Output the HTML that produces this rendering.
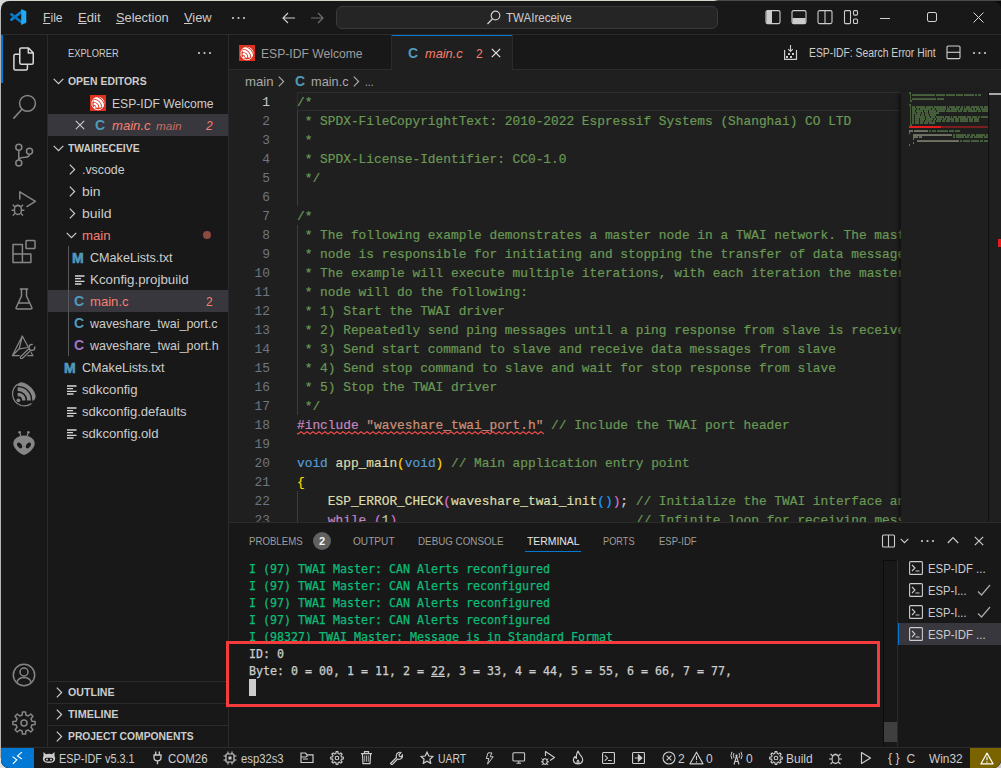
<!DOCTYPE html>
<html lang="en"><head><meta charset="utf-8"><title>main.c - TWAIreceive - Visual Studio Code</title>
<style>
html,body{margin:0;padding:0;width:1001px;height:768px;overflow:hidden;background:#0b0b0b}
body{font-family:"Liberation Sans",sans-serif;font-size:13px;color:#ccc;position:relative}
.b{position:absolute;display:block}
.t{position:absolute;transform-origin:0 50%;white-space:pre;height:20px;line-height:20px}
.mono{font-family:"Liberation Mono",monospace}
#win{position:absolute;left:1px;top:1px;width:1000px;height:767px;background:#181818;border-radius:8px;overflow:hidden}
.code{position:absolute;left:297px;white-space:pre;font-family:"Liberation Mono",monospace;font-size:12.83px;height:19px;line-height:19px;color:#d4d4d4;-webkit-text-stroke:0.2px}
.ln{position:absolute;left:229px;width:41px;text-align:right;font-family:"Liberation Mono",monospace;font-size:12.83px;height:19px;line-height:19px;color:#6e7681}
.term{position:absolute;left:249px;white-space:pre;font-family:"DejaVu Sans Mono","Liberation Mono",monospace;font-size:11.63px;height:17px;line-height:17px;color:#ccc;-webkit-text-stroke:0.25px}
.c{color:#6a9955}.k{color:#569cd6}.p{color:#c586c0}.s{color:#ce9178}.f{color:#dcdcaa}.y{color:#ffd700}.m{color:#da70d6}.bl{color:#179fff}.n{color:#b5cea8}
.g{color:#0dbc79}

</style></head>
<body>
<div class="b" style="left:0px;top:0px;width:1001px;height:1px;background:#555;background:linear-gradient(90deg,#d6d5cb 0,#d6d5cb 714px,#4a4a4a 718px,#4a4a4a 100%)"></div>
<div class="b" style="left:0px;top:0px;width:1px;height:768px;background:#b5b5b5;"></div>
<div class="b" style="left:0px;top:0px;width:10px;height:10px;background:#d9d9d9;"></div>
<div class="b" style="left:0px;top:758px;width:10px;height:10px;background:#e4e4e4;"></div>
<div class="b" style="left:991px;top:758px;width:10px;height:10px;background:#c9c9c9;"></div>
<div id="win"></div>
<div class="b" style="left:1px;top:34px;width:1000px;height:1px;background:#2b2b2b;"></div>
<svg class="b" style="left:9px;top:8px;" width="19" height="18" viewBox="0 0 19 18" preserveAspectRatio="none"><path d="M12.3 4 L2.4 11.6" stroke="#0c7fce" stroke-width="2.7" stroke-linecap="round"/><path d="M12.3 14 L2.4 6.4" stroke="#0a74bf" stroke-width="2.7" stroke-linecap="round"/><path d="M12.2 1 L17.3 3.2 V14.8 L12.2 17 Z" fill="#25a8f3"/></svg>
<span id="t1" class="t" style="left:43px;top:8px;font-size:13px;color:#cccccc;transform:scaleX(0.9347);"><u>F</u>ile</span>
<span id="t2" class="t" style="left:78px;top:8px;font-size:13px;color:#cccccc;transform:scaleX(1.0086);"><u>E</u>dit</span>
<span id="t3" class="t" style="left:116px;top:8px;font-size:13px;color:#cccccc;transform:scaleX(0.9835);"><u>S</u>election</span>
<span id="t4" class="t" style="left:184px;top:8px;font-size:13px;color:#cccccc;transform:scaleX(0.9874);"><u>V</u>iew</span>
<svg class="b" style="left:231px;top:16px;" width="16" height="4" viewBox="0 0 16 4" preserveAspectRatio="none"><circle cx="2" cy="2" r="1.1" fill="#ccc"/><circle cx="7.5" cy="2" r="1.1" fill="#ccc"/><circle cx="13" cy="2" r="1.1" fill="#ccc"/></svg>
<svg class="b" style="left:281px;top:10px;" width="16" height="16" viewBox="0 0 16 16" preserveAspectRatio="none"><path d="M14 8 H2.5 M7 3 L2 8 L7 13" stroke="#ccc" stroke-width="1.2" fill="none"/></svg>
<svg class="b" style="left:309px;top:10px;" width="16" height="16" viewBox="0 0 16 16" preserveAspectRatio="none"><path d="M2 8 H13.5 M9 3 L14 8 L9 13" stroke="#6f6f6f" stroke-width="1.2" fill="none"/></svg>
<div class="b" style="left:336px;top:6px;width:382px;height:23px;background:#252526;border:1px solid #3a3a3a;border-radius:6px;box-sizing:border-box"></div>
<svg class="b" style="left:486px;top:9px;" width="16" height="16" viewBox="0 0 16 16" preserveAspectRatio="none"><circle cx="9.5" cy="6.5" r="4.3" stroke="#ccc" stroke-width="1.2" fill="none"/><path d="M6.5 9.7 L1.5 15" stroke="#ccc" stroke-width="1.3"/></svg>
<span id="t5" class="t" style="left:506px;top:8px;font-size:13px;color:#cccccc;transform:scaleX(0.8874);">TWAIreceive</span>
<svg class="b" style="left:765px;top:10px;" width="16" height="16" viewBox="0 0 16 16" preserveAspectRatio="none"><rect x="1" y="0.6" width="14" height="13" rx="1.5" stroke="#ccc" stroke-width="1.1" fill="none"/><rect x="1.5" y="1" width="5.5" height="12.2" fill="#ccc"/></svg>
<svg class="b" style="left:791px;top:10px;" width="16" height="16" viewBox="0 0 16 16" preserveAspectRatio="none"><rect x="1" y="0.6" width="14" height="13" rx="1.5" stroke="#ccc" stroke-width="1.1" fill="none"/><rect x="1.5" y="8" width="13" height="5.2" fill="#ccc"/></svg>
<svg class="b" style="left:817px;top:10px;" width="16" height="16" viewBox="0 0 16 16" preserveAspectRatio="none"><rect x="1" y="0.6" width="14" height="13" rx="1.5" stroke="#ccc" stroke-width="1.1" fill="none"/><path d="M8 0.6 V13.6" stroke="#ccc" stroke-width="1.1"/></svg>
<svg class="b" style="left:843px;top:10px;" width="16" height="16" viewBox="0 0 16 16" preserveAspectRatio="none"><rect x="1.5" y="0.6" width="6" height="13" rx="1" stroke="#ccc" stroke-width="1.1" fill="none"/><rect x="10.5" y="0.6" width="4" height="4.5" rx="1" stroke="#ccc" stroke-width="1.1" fill="none"/><rect x="10.5" y="9" width="4" height="4.5" rx="1" stroke="#ccc" stroke-width="1.1" fill="none"/></svg>
<div class="b" style="left:880px;top:18px;width:10px;height:1px;background:#d0d0d0;"></div>
<div class="b" style="left:927px;top:12px;width:10px;height:10px;background:transparent;border:1px solid #d0d0d0;border-radius:2px;box-sizing:border-box"></div>
<svg class="b" style="left:973px;top:12px;" width="11" height="11" viewBox="0 0 11 11" preserveAspectRatio="none"><path d="M0.5 0.5 L10.5 10.5 M10.5 0.5 L0.5 10.5" stroke="#d8d8d8" stroke-width="1"/></svg>
<div class="b" style="left:47px;top:35px;width:1px;height:713px;background:#2b2b2b;"></div>
<div class="b" style="left:1px;top:35px;width:1.5px;height:48px;background:#0078d4;"></div>
<svg class="b" style="left:12px;top:47px;" width="24" height="25" viewBox="0 0 24 25" preserveAspectRatio="none"><path d="M7.75 2.5 Q7.75 1 9.25 1 H16.5 L21.25 5.8 V15.8 Q21.25 17.3 19.75 17.3 H9.25 Q7.75 17.3 7.75 15.8 Z M16.3 1.2 V6 H21.1" stroke="#d7d7d7" stroke-width="1.5" fill="none" stroke-linejoin="round"/><path d="M7.75 7.2 H3.4 Q1.9 7.2 1.9 8.7 V21.5 Q1.9 23 3.4 23 H13.9 Q15.4 23 15.4 21.5 V17.3" stroke="#d7d7d7" stroke-width="1.5" fill="none"/></svg>
<svg class="b" style="left:12px;top:94px;" width="26" height="26" viewBox="0 0 26 26" preserveAspectRatio="none"><circle cx="15.5" cy="9.4" r="7.9" stroke="#868686" stroke-width="1.5" fill="none"/><path d="M10 15.3 L1.4 24.6" stroke="#868686" stroke-width="1.6"/></svg>
<svg class="b" style="left:12px;top:143px;" width="24" height="24" viewBox="0 0 24 24" preserveAspectRatio="none"><circle cx="6.8" cy="4.2" r="3" stroke="#868686" stroke-width="1.5" fill="none"/><circle cx="6.8" cy="20" r="3" stroke="#868686" stroke-width="1.5" fill="none"/><circle cx="17.5" cy="8.3" r="3" stroke="#868686" stroke-width="1.5" fill="none"/><path d="M6.8 7.2 V17 M17.5 11.3 Q17.5 14 13 14.3 Q7.3 14.5 6.8 17" stroke="#868686" stroke-width="1.5" fill="none"/></svg>
<svg class="b" style="left:12px;top:190px;overflow:visible;" width="26" height="27" viewBox="0 0 26 27" preserveAspectRatio="none"><path d="M7.8 9.5 V1.8 L23.4 11.4 L14.5 16.8" stroke="#868686" stroke-width="1.5" fill="none" stroke-linejoin="round"/><ellipse cx="5.9" cy="19.9" rx="3.5" ry="4.6" stroke="#868686" stroke-width="1.5" fill="none"/><path d="M3 17 L0.8 14.8 M8.8 17 L11 14.8 M2.4 20.2 H-0.4 M9.4 20.2 H12.4 M3 23.2 L0.8 25.6 M8.8 23.2 L11 25.6 M3.3 16.6 Q5.9 14.4 8.5 16.6" stroke="#868686" stroke-width="1.4" fill="none"/></svg>
<svg class="b" style="left:12px;top:239px;" width="25" height="25" viewBox="0 0 25 25" preserveAspectRatio="none"><path d="M1 5.4 H10.4 V14.9 H18.9 V23.4 H1 Z M1 14.9 H10.4 V23.4" stroke="#868686" stroke-width="1.5" fill="none" stroke-linejoin="round"/><rect x="14" y="1.5" width="9" height="8" rx="0.8" stroke="#868686" stroke-width="1.5" fill="none"/></svg>
<svg class="b" style="left:12px;top:287px;" width="24" height="24" viewBox="0 0 24 24" preserveAspectRatio="none"><path d="M7.8 2 H16.2 M9.5 2 V9 L4.2 20.5 Q3.7 22 5.2 22 H18.8 Q20.3 22 19.8 20.5 L14.5 9 V2 M6.5 16 H17.5" stroke="#868686" stroke-width="1.5" fill="none" stroke-linejoin="round"/></svg>
<svg class="b" style="left:11px;top:335px;" width="26" height="24" viewBox="0 0 26 24" preserveAspectRatio="none"><path d="M11.3 1 L1.3 20.7 H21.9 Z M11.3 1 L8.2 13.8 L1.3 20.7 M8.2 13.8 L17 12.5" stroke="#868686" stroke-width="1.25" fill="none" stroke-linejoin="round"/><path d="M10.6 22.4 L19 14.4" stroke="#181818" stroke-width="5.4" stroke-linecap="round"/><path d="M10.6 22.4 L19 14.4" stroke="#868686" stroke-width="3.6" stroke-linecap="round"/><path d="M10.6 22.4 L19 14.4" stroke="#181818" stroke-width="1.3" stroke-linecap="round"/><circle cx="20.9" cy="12.4" r="2.9" fill="#181818" stroke="#868686" stroke-width="1.3"/><path d="M21.4 11.8 L25.4 8" stroke="#181818" stroke-width="2.6"/></svg>
<svg class="b" style="left:11px;top:380.5px;" width="26" height="26" viewBox="0 0 26 26" preserveAspectRatio="none"><defs><clipPath id="ec"><circle cx="13.4" cy="12.6" r="11.8"/></clipPath></defs><g clip-path="url(#ec)"><circle cx="7.2" cy="19" r="5.6" stroke="#868686" stroke-width="3.5" fill="none"/><circle cx="7.2" cy="19" r="10.8" stroke="#868686" stroke-width="3.8" fill="none"/><circle cx="7.2" cy="19" r="16" stroke="#868686" stroke-width="3.9" fill="none"/><rect x="0" y="19.5" width="26" height="8" fill="#181818"/><rect x="0" y="0" width="6.6" height="26" fill="#181818"/></g><circle cx="7.4" cy="19.3" r="1.9" fill="#868686"/><path d="M6.5 3.2 Q1 7.5 1.6 14 Q2.5 22 10 24.5 Q16 26 20.5 22.5" stroke="#868686" stroke-width="1.2" fill="none"/></svg>
<svg class="b" style="left:11px;top:430px;" width="26" height="26" viewBox="0 0 26 26" preserveAspectRatio="none"><path d="M13 5.5 C19.5 5.5 23.7 9.5 23.7 13.5 C23.7 18.5 17 24 13 25 C9 24 2.3 18.5 2.3 13.5 C2.3 9.5 6.5 5.5 13 5.5 Z" fill="#868686"/><ellipse cx="8.6" cy="15.4" rx="3.2" ry="2.1" transform="rotate(55 8.6 15.4)" fill="#181818"/><ellipse cx="17.4" cy="15.4" rx="3.2" ry="2.1" transform="rotate(-55 17.4 15.4)" fill="#181818"/><path d="M10 6.5 L8.8 2.5 M16 6.5 L17.2 2.5" stroke="#868686" stroke-width="1.1"/><circle cx="8.6" cy="2.2" r="1.3" fill="#868686"/><circle cx="17.4" cy="2.2" r="1.3" fill="#868686"/></svg>
<svg class="b" style="left:12px;top:663px;" width="24" height="24" viewBox="0 0 24 24" preserveAspectRatio="none"><circle cx="12" cy="12" r="10.7" stroke="#868686" stroke-width="1.5" fill="none"/><circle cx="12" cy="9" r="4" stroke="#868686" stroke-width="1.5" fill="none"/><path d="M4.8 19.8 Q6 14.6 12 14.6 Q18 14.6 19.2 19.8" stroke="#868686" stroke-width="1.5" fill="none"/></svg>
<svg class="b" style="left:12px;top:711px;" width="24" height="24" viewBox="0 0 24 24" preserveAspectRatio="none"><path d="M19.98 10.13 L23.09 10.41 L23.09 13.59 L19.98 13.87 L18.97 16.32 L20.96 18.71 L18.71 20.96 L16.32 18.97 L13.87 19.98 L13.59 23.09 L10.41 23.09 L10.13 19.98 L7.68 18.97 L5.29 20.96 L3.04 18.71 L5.03 16.32 L4.02 13.87 L0.91 13.59 L0.91 10.41 L4.02 10.13 L5.03 7.68 L3.04 5.29 L5.29 3.04 L7.68 5.03 L10.13 4.02 L10.41 0.91 L13.59 0.91 L13.87 4.02 L16.32 5.03 L18.71 3.04 L20.96 5.29 L18.97 7.68 Z" stroke="#868686" stroke-width="1.5" fill="none" stroke-linejoin="round"/><circle cx="12" cy="12" r="3" stroke="#868686" stroke-width="1.5" fill="none"/></svg>
<div class="b" style="left:228px;top:35px;width:1px;height:713px;background:#2b2b2b;"></div>
<span id="t6" class="t" style="left:68px;top:43px;font-size:11px;color:#cccccc;transform:scaleX(0.8444);">EXPLORER</span>
<svg class="b" style="left:197px;top:51px;" width="16" height="4" viewBox="0 0 16 4" preserveAspectRatio="none"><circle cx="2" cy="2" r="1.1" fill="#ccc"/><circle cx="7.5" cy="2" r="1.1" fill="#ccc"/><circle cx="13" cy="2" r="1.1" fill="#ccc"/></svg>
<div class="b" style="left:48px;top:114px;width:180px;height:22px;background:#37373d;"></div>
<div class="b" style="left:48px;top:290px;width:180px;height:22px;background:#37373d;"></div>
<svg class="b" style="left:53px;top:78px;" width="11" height="7" viewBox="0 0 11 7" preserveAspectRatio="none"><path d="M0.7 0.8 L5.5 5.6 L10.3 0.8" stroke="#ccc" stroke-width="1.2" fill="none"/></svg>
<span id="t7" class="t" style="left:68px;top:71px;font-size:11px;color:#cccccc;transform:scaleX(0.9477);font-weight:bold;">OPEN EDITORS</span>
<svg class="b" style="left:90px;top:95px;" width="16" height="16" viewBox="0 0 16 16" preserveAspectRatio="none"><rect x="0" y="0" width="16" height="16" fill="#de3220"/><defs><clipPath id="ei1"><circle cx="7.9" cy="8.3" r="6.6"/></clipPath></defs><g clip-path="url(#ei1)"><circle cx="4" cy="12.2" r="3.3" stroke="#fff" stroke-width="2.1" fill="none"/><circle cx="4" cy="12.2" r="6.3" stroke="#fff" stroke-width="2.1" fill="none"/><circle cx="4" cy="12.2" r="9.3" stroke="#fff" stroke-width="2.2" fill="none"/><circle cx="4" cy="12.2" r="12" stroke="#fff" stroke-width="1.6" fill="none"/><rect x="0" y="12.6" width="16" height="4" fill="#de3220"/><rect x="0" y="0" width="3.6" height="16" fill="#de3220"/></g><circle cx="4.6" cy="12.4" r="1.1" fill="#fff"/><path d="M3.4 4.2 Q1.2 7.5 2.2 11 Q3.6 14.6 8 14.8 Q11 14.6 12.6 12.6" stroke="#fff" stroke-width="0.8" fill="none"/></svg>
<span id="t8" class="t" style="left:112px;top:94px;font-size:13px;color:#cccccc;transform:scaleX(0.9334);">ESP-IDF Welcome</span>
<svg class="b" style="left:75px;top:120px;" width="10" height="10" viewBox="0 0 10 10" preserveAspectRatio="none"><path d="M0.8 0.8 L9.2 9.2 M9.2 0.8 L0.8 9.2" stroke="#ccc" stroke-width="1.1"/></svg>
<span id="t9" class="t" style="left:95px;top:115px;font-size:14px;color:#519aba;transform:scaleX(1.0000);font-weight:bold;">C</span>
<span id="t10" class="t" style="left:112px;top:116px;font-size:13px;color:#f88070;transform:scaleX(1.0079);font-style:italic;">main.c</span>
<span id="t11" class="t" style="left:156px;top:116px;font-size:11.5px;color:#c66d61;transform:scaleX(1.0266);font-style:italic;">main</span>
<span id="t12" class="t" style="left:206px;top:116px;font-size:12px;color:#f88070;transform:scaleX(1.0000);font-style:italic;">2</span>
<svg class="b" style="left:53px;top:145px;" width="11" height="7" viewBox="0 0 11 7" preserveAspectRatio="none"><path d="M0.7 0.8 L5.5 5.6 L10.3 0.8" stroke="#ccc" stroke-width="1.2" fill="none"/></svg>
<span id="t13" class="t" style="left:68px;top:138px;font-size:11px;color:#cccccc;transform:scaleX(0.9446);font-weight:bold;">TWAIRECEIVE</span>
<svg class="b" style="left:68.5px;top:163.5px;" width="7" height="11" viewBox="0 0 7 11" preserveAspectRatio="none"><path d="M0.8 0.7 L5.6 5.5 L0.8 10.3" stroke="#ccc" stroke-width="1.2" fill="none"/></svg>
<span id="t14" class="t" style="left:82px;top:160px;font-size:13px;color:#cccccc;transform:scaleX(0.9506);">.vscode</span>
<svg class="b" style="left:68.5px;top:185.5px;" width="7" height="11" viewBox="0 0 7 11" preserveAspectRatio="none"><path d="M0.8 0.7 L5.6 5.5 L0.8 10.3" stroke="#ccc" stroke-width="1.2" fill="none"/></svg>
<span id="t15" class="t" style="left:82px;top:182px;font-size:13px;color:#cccccc;transform:scaleX(1.0715);">bin</span>
<svg class="b" style="left:68.5px;top:207.5px;" width="7" height="11" viewBox="0 0 7 11" preserveAspectRatio="none"><path d="M0.8 0.7 L5.6 5.5 L0.8 10.3" stroke="#ccc" stroke-width="1.2" fill="none"/></svg>
<span id="t16" class="t" style="left:82px;top:204px;font-size:13px;color:#cccccc;transform:scaleX(1.0776);">build</span>
<svg class="b" style="left:66px;top:232px;" width="11" height="7" viewBox="0 0 11 7" preserveAspectRatio="none"><path d="M0.7 0.8 L5.5 5.6 L10.3 0.8" stroke="#ccc" stroke-width="1.2" fill="none"/></svg>
<span id="t17" class="t" style="left:82px;top:226px;font-size:13px;color:#f88070;transform:scaleX(1.0146);">main</span>
<div class="b" style="left:203px;top:231px;width:8px;height:8px;background:#8c4a43;border-radius:50%"></div>
<div class="b" style="left:67.5px;top:246px;width:1px;height:110px;background:#585858;"></div>
<span id="t18" class="t" style="left:72px;top:248px;font-size:14px;color:#519aba;transform:scaleX(1.0000);font-weight:bold;-webkit-text-stroke:0.6px #519aba;">M</span>
<span id="t19" class="t" style="left:90px;top:248px;font-size:13px;color:#cccccc;transform:scaleX(0.9689);">CMakeLists.txt</span>
<svg class="b" style="left:75px;top:275px;" width="10" height="10" viewBox="0 0 10 10" preserveAspectRatio="none"><path d="M0 1 H9.5 M0 3.7 H6 M0 6.3 H9.5 M0 9 H6.5" stroke="#d4d7d6" stroke-width="1.3"/></svg>
<span id="t20" class="t" style="left:90px;top:270px;font-size:13px;color:#cccccc;transform:scaleX(1.0257);">Kconfig.projbuild</span>
<span id="t21" class="t" style="left:74px;top:291px;font-size:14px;color:#519aba;transform:scaleX(1.0000);font-weight:bold;">C</span>
<span id="t22" class="t" style="left:90px;top:292px;font-size:13px;color:#f88070;transform:scaleX(1.0079);">main.c</span>
<span id="t23" class="t" style="left:206px;top:292px;font-size:12px;color:#f88070;transform:scaleX(1.0000);">2</span>
<span id="t24" class="t" style="left:74px;top:313px;font-size:14px;color:#519aba;transform:scaleX(1.0000);font-weight:bold;">C</span>
<span id="t25" class="t" style="left:90px;top:314px;font-size:13px;color:#cccccc;transform:scaleX(0.9596);">waveshare_twai_port.c</span>
<span id="t26" class="t" style="left:74px;top:335px;font-size:14px;color:#a074c4;transform:scaleX(1.0000);font-weight:bold;">C</span>
<span id="t27" class="t" style="left:90px;top:336px;font-size:13px;color:#cccccc;transform:scaleX(0.9618);">waveshare_twai_port.h</span>
<span id="t28" class="t" style="left:64px;top:358px;font-size:14px;color:#519aba;transform:scaleX(1.0000);font-weight:bold;-webkit-text-stroke:0.6px #519aba;">M</span>
<span id="t29" class="t" style="left:82px;top:358px;font-size:13px;color:#cccccc;transform:scaleX(0.9689);">CMakeLists.txt</span>
<svg class="b" style="left:67px;top:385px;" width="10" height="10" viewBox="0 0 10 10" preserveAspectRatio="none"><path d="M0 1 H9.5 M0 3.7 H6 M0 6.3 H9.5 M0 9 H6.5" stroke="#d4d7d6" stroke-width="1.3"/></svg>
<span id="t30" class="t" style="left:82px;top:380px;font-size:13px;color:#cccccc;transform:scaleX(1.0123);">sdkconfig</span>
<svg class="b" style="left:67px;top:407px;" width="10" height="10" viewBox="0 0 10 10" preserveAspectRatio="none"><path d="M0 1 H9.5 M0 3.7 H6 M0 6.3 H9.5 M0 9 H6.5" stroke="#d4d7d6" stroke-width="1.3"/></svg>
<span id="t31" class="t" style="left:82px;top:402px;font-size:13px;color:#cccccc;transform:scaleX(1.0050);">sdkconfig.defaults</span>
<svg class="b" style="left:67px;top:429px;" width="10" height="10" viewBox="0 0 10 10" preserveAspectRatio="none"><path d="M0 1 H9.5 M0 3.7 H6 M0 6.3 H9.5 M0 9 H6.5" stroke="#d4d7d6" stroke-width="1.3"/></svg>
<span id="t32" class="t" style="left:82px;top:424px;font-size:13px;color:#cccccc;transform:scaleX(1.0093);">sdkconfig.old</span>
<div class="b" style="left:48px;top:681px;width:180px;height:1px;background:#2b2b2b;"></div>
<div class="b" style="left:48px;top:703px;width:180px;height:1px;background:#2b2b2b;"></div>
<div class="b" style="left:48px;top:725px;width:180px;height:1px;background:#2b2b2b;"></div>
<svg class="b" style="left:56px;top:686.5px;" width="7" height="11" viewBox="0 0 7 11" preserveAspectRatio="none"><path d="M0.8 0.7 L5.6 5.5 L0.8 10.3" stroke="#ccc" stroke-width="1.2" fill="none"/></svg>
<span id="t33" class="t" style="left:68px;top:682px;font-size:11px;color:#cccccc;transform:scaleX(0.9652);font-weight:bold;">OUTLINE</span>
<svg class="b" style="left:56px;top:708.5px;" width="7" height="11" viewBox="0 0 7 11" preserveAspectRatio="none"><path d="M0.8 0.7 L5.6 5.5 L0.8 10.3" stroke="#ccc" stroke-width="1.2" fill="none"/></svg>
<span id="t34" class="t" style="left:68px;top:704px;font-size:11px;color:#cccccc;transform:scaleX(0.9855);font-weight:bold;">TIMELINE</span>
<svg class="b" style="left:56px;top:730.5px;" width="7" height="11" viewBox="0 0 7 11" preserveAspectRatio="none"><path d="M0.8 0.7 L5.6 5.5 L0.8 10.3" stroke="#ccc" stroke-width="1.2" fill="none"/></svg>
<span id="t35" class="t" style="left:68px;top:726px;font-size:11px;color:#cccccc;transform:scaleX(0.9383);font-weight:bold;">PROJECT COMPONENTS</span>
<div class="b" style="left:229px;top:35px;width:772px;height:487px;background:#1f1f1f;"></div>
<div class="b" style="left:229px;top:35px;width:772px;height:35px;background:#181818;"></div>
<div class="b" style="left:229px;top:69px;width:772px;height:1px;background:#2b2b2b;"></div>
<div class="b" style="left:391px;top:35px;width:1px;height:35px;background:#2b2b2b;"></div>
<div class="b" style="left:392px;top:35px;width:120px;height:36px;background:#1f1f1f;"></div>
<div class="b" style="left:392px;top:35px;width:120px;height:1px;background:#0078d4;"></div>
<div class="b" style="left:512px;top:35px;width:1px;height:35px;background:#2b2b2b;"></div>
<svg class="b" style="left:239px;top:45px;" width="16" height="16" viewBox="0 0 16 16" preserveAspectRatio="none"><rect x="0" y="0" width="16" height="16" fill="#de3220"/><defs><clipPath id="ei2"><circle cx="7.9" cy="8.3" r="6.6"/></clipPath></defs><g clip-path="url(#ei2)"><circle cx="4" cy="12.2" r="3.3" stroke="#fff" stroke-width="2.1" fill="none"/><circle cx="4" cy="12.2" r="6.3" stroke="#fff" stroke-width="2.1" fill="none"/><circle cx="4" cy="12.2" r="9.3" stroke="#fff" stroke-width="2.2" fill="none"/><circle cx="4" cy="12.2" r="12" stroke="#fff" stroke-width="1.6" fill="none"/><rect x="0" y="12.6" width="16" height="4" fill="#de3220"/><rect x="0" y="0" width="3.6" height="16" fill="#de3220"/></g><circle cx="4.6" cy="12.4" r="1.1" fill="#fff"/><path d="M3.4 4.2 Q1.2 7.5 2.2 11 Q3.6 14.6 8 14.8 Q11 14.6 12.6 12.6" stroke="#fff" stroke-width="0.8" fill="none"/></svg>
<span id="t36" class="t" style="left:261px;top:44px;font-size:13px;color:#9d9d9d;transform:scaleX(0.9334);">ESP-IDF Welcome</span>
<span id="t37" class="t" style="left:408px;top:43px;font-size:14px;color:#519aba;transform:scaleX(1.0000);font-weight:bold;">C</span>
<span id="t38" class="t" style="left:425px;top:44px;font-size:13px;color:#f88070;transform:scaleX(0.9818);font-style:italic;">main.c</span>
<span id="t39" class="t" style="left:476px;top:44px;font-size:12px;color:#f88070;transform:scaleX(1.0000);">2</span>
<svg class="b" style="left:491px;top:48px;" width="10" height="10" viewBox="0 0 10 10" preserveAspectRatio="none"><path d="M0.8 0.8 L9.2 9.2 M9.2 0.8 L0.8 9.2" stroke="#e8e8e8" stroke-width="1.2"/></svg>
<svg class="b" style="left:783px;top:44px;" width="16" height="17" viewBox="0 0 16 17" preserveAspectRatio="none"><path d="M1.6 6 V15.4 H13.5 V6" stroke="#ccc" stroke-width="1.2" fill="none" stroke-linejoin="round"/><path d="M7.5 1 V7.3 M5.2 5.2 L7.5 7.5 L9.8 5.2" stroke="#ccc" stroke-width="1.1" fill="none"/><rect x="5" y="9" width="2" height="2" fill="#ccc"/><rect x="9" y="9" width="2" height="2" fill="#ccc"/><rect x="3" y="12" width="2" height="2" fill="#ccc"/><rect x="7" y="12" width="2" height="2" fill="#ccc"/></svg>
<span id="t40" class="t" style="left:809px;top:42.5px;font-size:12px;color:#cccccc;transform:scaleX(0.8630);">ESP-IDF: Search Error Hint</span>
<svg class="b" style="left:946px;top:45px;" width="15" height="15" viewBox="0 0 15 15" preserveAspectRatio="none"><rect x="1" y="1" width="13" height="12.6" rx="1.2" stroke="#d0d0d0" stroke-width="1.1" fill="none"/><path d="M1 7.3 H14" stroke="#d0d0d0" stroke-width="1.1"/></svg>
<svg class="b" style="left:972px;top:51px;" width="16" height="4" viewBox="0 0 16 4" preserveAspectRatio="none"><circle cx="2" cy="2" r="1.1" fill="#ccc"/><circle cx="7.5" cy="2" r="1.1" fill="#ccc"/><circle cx="13" cy="2" r="1.1" fill="#ccc"/></svg>
<span id="t41" class="t" style="left:245px;top:72px;font-size:13px;color:#a9a9a9;transform:scaleX(1.0146);">main</span>
<svg class="b" style="left:278px;top:76px;" width="7" height="11" viewBox="0 0 7 11" preserveAspectRatio="none"><path d="M0.8 0.7 L5.6 5.5 L0.8 10.3" stroke="#a9a9a9" stroke-width="1.2" fill="none"/></svg>
<span id="t42" class="t" style="left:295px;top:71px;font-size:14px;color:#519aba;transform:scaleX(1.0000);font-weight:bold;">C</span>
<span id="t43" class="t" style="left:311px;top:72px;font-size:13px;color:#a9a9a9;transform:scaleX(0.9818);">main.c</span>
<svg class="b" style="left:353px;top:76px;" width="7" height="11" viewBox="0 0 7 11" preserveAspectRatio="none"><path d="M0.8 0.7 L5.6 5.5 L0.8 10.3" stroke="#a9a9a9" stroke-width="1.2" fill="none"/></svg>
<span id="t44" class="t" style="left:365px;top:72px;font-size:13px;color:#a9a9a9;transform:scaleX(0.7931);">...</span>
<div class="b" style="left:229px;top:92px;width:672px;height:430px;overflow:hidden">
<div class="b" style="left:68px;top:0;width:700px;height:19px;box-sizing:border-box;border:1px solid #2e2e2e"></div>
<div class="b" style="left:68px;top:19px;width:1px;height:95px;background:#3c3c3c"></div>
<div class="b" style="left:68px;top:133px;width:1px;height:190px;background:#3c3c3c"></div>
<div class="b" style="left:68px;top:399px;width:1px;height:57px;background:#3c3c3c"></div>
<div class="ln" style="left:0;top:1px;color:#ccc">1</div><div class="code" style="left:68px;top:1px"><span class="c">/*</span></div>
<div class="ln" style="left:0;top:20px;color:#6e7681">2</div><div class="code" style="left:68px;top:20px"><span class="c"> * SPDX-FileCopyrightText: 2010-2022 Espressif Systems (Shanghai) CO LTD</span></div>
<div class="ln" style="left:0;top:39px;color:#6e7681">3</div><div class="code" style="left:68px;top:39px"><span class="c"> *</span></div>
<div class="ln" style="left:0;top:58px;color:#6e7681">4</div><div class="code" style="left:68px;top:58px"><span class="c"> * SPDX-License-Identifier: CC0-1.0</span></div>
<div class="ln" style="left:0;top:77px;color:#6e7681">5</div><div class="code" style="left:68px;top:77px"><span class="c"> */</span></div>
<div class="ln" style="left:0;top:96px;color:#6e7681">6</div><div class="code" style="left:68px;top:96px"></div>
<div class="ln" style="left:0;top:115px;color:#6e7681">7</div><div class="code" style="left:68px;top:115px"><span class="c">/*</span></div>
<div class="ln" style="left:0;top:134px;color:#6e7681">8</div><div class="code" style="left:68px;top:134px"><span class="c"> * The following example demonstrates a master node in a TWAI network. The master</span></div>
<div class="ln" style="left:0;top:153px;color:#6e7681">9</div><div class="code" style="left:68px;top:153px"><span class="c"> * node is responsible for initiating and stopping the transfer of data messages. The</span></div>
<div class="ln" style="left:0;top:172px;color:#6e7681">10</div><div class="code" style="left:68px;top:172px"><span class="c"> * The example will execute multiple iterations, with each iteration the master</span></div>
<div class="ln" style="left:0;top:191px;color:#6e7681">11</div><div class="code" style="left:68px;top:191px"><span class="c"> * node will do the following:</span></div>
<div class="ln" style="left:0;top:210px;color:#6e7681">12</div><div class="code" style="left:68px;top:210px"><span class="c"> * 1) Start the TWAI driver</span></div>
<div class="ln" style="left:0;top:229px;color:#6e7681">13</div><div class="code" style="left:68px;top:229px"><span class="c"> * 2) Repeatedly send ping messages until a ping response from slave is received</span></div>
<div class="ln" style="left:0;top:248px;color:#6e7681">14</div><div class="code" style="left:68px;top:248px"><span class="c"> * 3) Send start command to slave and receive data messages from slave</span></div>
<div class="ln" style="left:0;top:267px;color:#6e7681">15</div><div class="code" style="left:68px;top:267px"><span class="c"> * 4) Send stop command to slave and wait for stop response from slave</span></div>
<div class="ln" style="left:0;top:286px;color:#6e7681">16</div><div class="code" style="left:68px;top:286px"><span class="c"> * 5) Stop the TWAI driver</span></div>
<div class="ln" style="left:0;top:305px;color:#6e7681">17</div><div class="code" style="left:68px;top:305px"><span class="c"> */</span></div>
<div class="ln" style="left:0;top:324px;color:#6e7681">18</div><div class="code" style="left:68px;top:324px"><span class="p">#include</span> <span class="s">"waveshare_twai_port.h"</span> <span class="c">// Include the TWAI port header</span></div>
<div class="ln" style="left:0;top:343px;color:#6e7681">19</div><div class="code" style="left:68px;top:343px"></div>
<div class="ln" style="left:0;top:362px;color:#6e7681">20</div><div class="code" style="left:68px;top:362px"><span class="k">void</span> <span class="f">app_main</span><span class="y">(</span><span class="k">void</span><span class="y">)</span> <span class="c">// Main application entry point</span></div>
<div class="ln" style="left:0;top:381px;color:#6e7681">21</div><div class="code" style="left:68px;top:381px"><span class="y">{</span></div>
<div class="ln" style="left:0;top:400px;color:#6e7681">22</div><div class="code" style="left:68px;top:400px">    <span class="f">ESP_ERROR_CHECK</span><span class="m">(</span><span class="f">waveshare_twai_init</span><span class="bl">()</span><span class="m">)</span>; <span class="c">// Initialize the TWAI interface and start</span></div>
<div class="ln" style="left:0;top:419px;color:#6e7681">23</div><div class="code" style="left:68px;top:419px">    <span class="p">while</span> <span class="m">(</span><span class="n">1</span><span class="m">)</span>                               <span class="c">// Infinite loop for receiving messages</span></div>
<div class="ln" style="left:0;top:438px;color:#6e7681">24</div><div class="code" style="left:68px;top:438px">    <span class="y">{</span></div>
<svg class="b" style="left:68px;top:339px" width="247" height="4" viewBox="0 0 247 4"><path d="M0 2.2 L1 3 L4 0.6 L7 3 L10 0.6 L13 3 L16 0.6 L19 3 L22 0.6 L25 3 L28 0.6 L31 3 L34 0.6 L37 3 L40 0.6 L43 3 L46 0.6 L49 3 L52 0.6 L55 3 L58 0.6 L61 3 L64 0.6 L67 3 L70 0.6 L73 3 L76 0.6 L79 3 L82 0.6 L85 3 L88 0.6 L91 3 L94 0.6 L97 3 L100 0.6 L103 3 L106 0.6 L109 3 L112 0.6 L115 3 L118 0.6 L121 3 L124 0.6 L127 3 L130 0.6 L133 3 L136 0.6 L139 3 L142 0.6 L145 3 L148 0.6 L151 3 L154 0.6 L157 3 L160 0.6 L163 3 L166 0.6 L169 3 L172 0.6 L175 3 L178 0.6 L181 3 L184 0.6 L187 3 L190 0.6 L193 3 L196 0.6 L199 3 L202 0.6 L205 3 L208 0.6 L211 3 L214 0.6 L217 3 L220 0.6 L223 3 L226 0.6 L229 3 L232 0.6 L235 3 L238 0.6 L241 3 L244 0.6 L247 3" stroke="#f14c4c" stroke-width="1.15" fill="none" stroke-linejoin="round"/></svg>
</div>
<div class="b" style="left:901px;top:92px;width:87px;height:430px;background:#1f1f1f;box-shadow:-3px 0 4px -1px rgba(0,0,0,0.55)"></div>
<svg class="b" style="left:909px;top:92px;" width="79" height="64" viewBox="0 0 79 64" preserveAspectRatio="none"><rect x="0" y="0.3" width="2" height="1.5" fill="#6a9955" opacity="0.68"/><rect x="1" y="2.3" width="1" height="1.5" fill="#6a9955" opacity="0.68"/><rect x="3" y="2.3" width="23" height="1.5" fill="#6a9955" opacity="0.68"/><rect x="27" y="2.3" width="9" height="1.5" fill="#6a9955" opacity="0.68"/><rect x="37" y="2.3" width="9" height="1.5" fill="#6a9955" opacity="0.68"/><rect x="47" y="2.3" width="7" height="1.5" fill="#6a9955" opacity="0.68"/><rect x="55" y="2.3" width="10" height="1.5" fill="#6a9955" opacity="0.68"/><rect x="66" y="2.3" width="2" height="1.5" fill="#6a9955" opacity="0.68"/><rect x="69" y="2.3" width="3" height="1.5" fill="#6a9955" opacity="0.68"/><rect x="1" y="4.3" width="1" height="1.5" fill="#6a9955" opacity="0.68"/><rect x="1" y="6.3" width="1" height="1.5" fill="#6a9955" opacity="0.68"/><rect x="3" y="6.3" width="24" height="1.5" fill="#6a9955" opacity="0.68"/><rect x="28" y="6.3" width="7" height="1.5" fill="#6a9955" opacity="0.68"/><rect x="1" y="8.3" width="2" height="1.5" fill="#6a9955" opacity="0.68"/><rect x="0" y="12.3" width="2" height="1.5" fill="#6a9955" opacity="0.68"/><rect x="1" y="14.3" width="1" height="1.5" fill="#6a9955" opacity="0.68"/><rect x="3" y="14.3" width="3" height="1.5" fill="#6a9955" opacity="0.68"/><rect x="7" y="14.3" width="9" height="1.5" fill="#6a9955" opacity="0.68"/><rect x="17" y="14.3" width="7" height="1.5" fill="#6a9955" opacity="0.68"/><rect x="25" y="14.3" width="12" height="1.5" fill="#6a9955" opacity="0.68"/><rect x="38" y="14.3" width="1" height="1.5" fill="#6a9955" opacity="0.68"/><rect x="40" y="14.3" width="6" height="1.5" fill="#6a9955" opacity="0.68"/><rect x="47" y="14.3" width="4" height="1.5" fill="#6a9955" opacity="0.68"/><rect x="52" y="14.3" width="2" height="1.5" fill="#6a9955" opacity="0.68"/><rect x="55" y="14.3" width="1" height="1.5" fill="#6a9955" opacity="0.68"/><rect x="57" y="14.3" width="4" height="1.5" fill="#6a9955" opacity="0.68"/><rect x="62" y="14.3" width="8" height="1.5" fill="#6a9955" opacity="0.68"/><rect x="71" y="14.3" width="3" height="1.5" fill="#6a9955" opacity="0.68"/><rect x="75" y="14.3" width="6" height="1.5" fill="#6a9955" opacity="0.68"/><rect x="1" y="16.3" width="1" height="1.5" fill="#6a9955" opacity="0.68"/><rect x="3" y="16.3" width="4" height="1.5" fill="#6a9955" opacity="0.68"/><rect x="8" y="16.3" width="2" height="1.5" fill="#6a9955" opacity="0.68"/><rect x="11" y="16.3" width="11" height="1.5" fill="#6a9955" opacity="0.68"/><rect x="23" y="16.3" width="3" height="1.5" fill="#6a9955" opacity="0.68"/><rect x="27" y="16.3" width="10" height="1.5" fill="#6a9955" opacity="0.68"/><rect x="38" y="16.3" width="3" height="1.5" fill="#6a9955" opacity="0.68"/><rect x="42" y="16.3" width="8" height="1.5" fill="#6a9955" opacity="0.68"/><rect x="51" y="16.3" width="3" height="1.5" fill="#6a9955" opacity="0.68"/><rect x="55" y="16.3" width="8" height="1.5" fill="#6a9955" opacity="0.68"/><rect x="64" y="16.3" width="2" height="1.5" fill="#6a9955" opacity="0.68"/><rect x="67" y="16.3" width="4" height="1.5" fill="#6a9955" opacity="0.68"/><rect x="72" y="16.3" width="9" height="1.5" fill="#6a9955" opacity="0.68"/><rect x="82" y="16.3" width="0" height="1.5" fill="#6a9955" opacity="0.68"/><rect x="1" y="18.3" width="1" height="1.5" fill="#6a9955" opacity="0.68"/><rect x="3" y="18.3" width="3" height="1.5" fill="#6a9955" opacity="0.68"/><rect x="7" y="18.3" width="7" height="1.5" fill="#6a9955" opacity="0.68"/><rect x="15" y="18.3" width="4" height="1.5" fill="#6a9955" opacity="0.68"/><rect x="20" y="18.3" width="7" height="1.5" fill="#6a9955" opacity="0.68"/><rect x="28" y="18.3" width="8" height="1.5" fill="#6a9955" opacity="0.68"/><rect x="37" y="18.3" width="11" height="1.5" fill="#6a9955" opacity="0.68"/><rect x="49" y="18.3" width="4" height="1.5" fill="#6a9955" opacity="0.68"/><rect x="54" y="18.3" width="4" height="1.5" fill="#6a9955" opacity="0.68"/><rect x="59" y="18.3" width="9" height="1.5" fill="#6a9955" opacity="0.68"/><rect x="69" y="18.3" width="3" height="1.5" fill="#6a9955" opacity="0.68"/><rect x="73" y="18.3" width="6" height="1.5" fill="#6a9955" opacity="0.68"/><rect x="1" y="20.3" width="1" height="1.5" fill="#6a9955" opacity="0.68"/><rect x="3" y="20.3" width="4" height="1.5" fill="#6a9955" opacity="0.68"/><rect x="8" y="20.3" width="4" height="1.5" fill="#6a9955" opacity="0.68"/><rect x="13" y="20.3" width="2" height="1.5" fill="#6a9955" opacity="0.68"/><rect x="16" y="20.3" width="3" height="1.5" fill="#6a9955" opacity="0.68"/><rect x="20" y="20.3" width="10" height="1.5" fill="#6a9955" opacity="0.68"/><rect x="1" y="22.3" width="1" height="1.5" fill="#6a9955" opacity="0.68"/><rect x="3" y="22.3" width="2" height="1.5" fill="#6a9955" opacity="0.68"/><rect x="6" y="22.3" width="5" height="1.5" fill="#6a9955" opacity="0.68"/><rect x="12" y="22.3" width="3" height="1.5" fill="#6a9955" opacity="0.68"/><rect x="16" y="22.3" width="4" height="1.5" fill="#6a9955" opacity="0.68"/><rect x="21" y="22.3" width="6" height="1.5" fill="#6a9955" opacity="0.68"/><rect x="1" y="24.3" width="1" height="1.5" fill="#6a9955" opacity="0.68"/><rect x="3" y="24.3" width="2" height="1.5" fill="#6a9955" opacity="0.68"/><rect x="6" y="24.3" width="10" height="1.5" fill="#6a9955" opacity="0.68"/><rect x="17" y="24.3" width="4" height="1.5" fill="#6a9955" opacity="0.68"/><rect x="22" y="24.3" width="4" height="1.5" fill="#6a9955" opacity="0.68"/><rect x="27" y="24.3" width="8" height="1.5" fill="#6a9955" opacity="0.68"/><rect x="36" y="24.3" width="5" height="1.5" fill="#6a9955" opacity="0.68"/><rect x="42" y="24.3" width="1" height="1.5" fill="#6a9955" opacity="0.68"/><rect x="44" y="24.3" width="4" height="1.5" fill="#6a9955" opacity="0.68"/><rect x="49" y="24.3" width="8" height="1.5" fill="#6a9955" opacity="0.68"/><rect x="58" y="24.3" width="4" height="1.5" fill="#6a9955" opacity="0.68"/><rect x="63" y="24.3" width="5" height="1.5" fill="#6a9955" opacity="0.68"/><rect x="69" y="24.3" width="2" height="1.5" fill="#6a9955" opacity="0.68"/><rect x="72" y="24.3" width="8" height="1.5" fill="#6a9955" opacity="0.68"/><rect x="1" y="26.3" width="1" height="1.5" fill="#6a9955" opacity="0.68"/><rect x="3" y="26.3" width="2" height="1.5" fill="#6a9955" opacity="0.68"/><rect x="6" y="26.3" width="4" height="1.5" fill="#6a9955" opacity="0.68"/><rect x="11" y="26.3" width="5" height="1.5" fill="#6a9955" opacity="0.68"/><rect x="17" y="26.3" width="7" height="1.5" fill="#6a9955" opacity="0.68"/><rect x="25" y="26.3" width="2" height="1.5" fill="#6a9955" opacity="0.68"/><rect x="28" y="26.3" width="5" height="1.5" fill="#6a9955" opacity="0.68"/><rect x="34" y="26.3" width="3" height="1.5" fill="#6a9955" opacity="0.68"/><rect x="38" y="26.3" width="7" height="1.5" fill="#6a9955" opacity="0.68"/><rect x="46" y="26.3" width="4" height="1.5" fill="#6a9955" opacity="0.68"/><rect x="51" y="26.3" width="8" height="1.5" fill="#6a9955" opacity="0.68"/><rect x="60" y="26.3" width="4" height="1.5" fill="#6a9955" opacity="0.68"/><rect x="65" y="26.3" width="5" height="1.5" fill="#6a9955" opacity="0.68"/><rect x="1" y="28.3" width="1" height="1.5" fill="#6a9955" opacity="0.68"/><rect x="3" y="28.3" width="2" height="1.5" fill="#6a9955" opacity="0.68"/><rect x="6" y="28.3" width="4" height="1.5" fill="#6a9955" opacity="0.68"/><rect x="11" y="28.3" width="4" height="1.5" fill="#6a9955" opacity="0.68"/><rect x="16" y="28.3" width="7" height="1.5" fill="#6a9955" opacity="0.68"/><rect x="24" y="28.3" width="2" height="1.5" fill="#6a9955" opacity="0.68"/><rect x="27" y="28.3" width="5" height="1.5" fill="#6a9955" opacity="0.68"/><rect x="33" y="28.3" width="3" height="1.5" fill="#6a9955" opacity="0.68"/><rect x="37" y="28.3" width="4" height="1.5" fill="#6a9955" opacity="0.68"/><rect x="42" y="28.3" width="3" height="1.5" fill="#6a9955" opacity="0.68"/><rect x="46" y="28.3" width="4" height="1.5" fill="#6a9955" opacity="0.68"/><rect x="51" y="28.3" width="8" height="1.5" fill="#6a9955" opacity="0.68"/><rect x="60" y="28.3" width="4" height="1.5" fill="#6a9955" opacity="0.68"/><rect x="65" y="28.3" width="5" height="1.5" fill="#6a9955" opacity="0.68"/><rect x="1" y="30.3" width="1" height="1.5" fill="#6a9955" opacity="0.68"/><rect x="3" y="30.3" width="2" height="1.5" fill="#6a9955" opacity="0.68"/><rect x="6" y="30.3" width="4" height="1.5" fill="#6a9955" opacity="0.68"/><rect x="11" y="30.3" width="3" height="1.5" fill="#6a9955" opacity="0.68"/><rect x="15" y="30.3" width="4" height="1.5" fill="#6a9955" opacity="0.68"/><rect x="20" y="30.3" width="6" height="1.5" fill="#6a9955" opacity="0.68"/><rect x="1" y="32.3" width="2" height="1.5" fill="#6a9955" opacity="0.68"/><rect x="0" y="34" width="79" height="2" fill="#7a1f1f"/><rect x="0" y="34" width="32" height="2" fill="#e51c1c"/><rect x="0" y="38.3" width="4" height="1.5" fill="#b9b9a0" opacity="0.68"/><rect x="5" y="38.3" width="14" height="1.5" fill="#b9b9a0" opacity="0.68"/><rect x="20" y="38.3" width="2" height="1.5" fill="#6a9955" opacity="0.68"/><rect x="23" y="38.3" width="4" height="1.5" fill="#6a9955" opacity="0.68"/><rect x="28" y="38.3" width="11" height="1.5" fill="#6a9955" opacity="0.68"/><rect x="40" y="38.3" width="5" height="1.5" fill="#6a9955" opacity="0.68"/><rect x="46" y="38.3" width="5" height="1.5" fill="#6a9955" opacity="0.68"/><rect x="0" y="40.3" width="1" height="1.5" fill="#b9b9a0" opacity="0.68"/><rect x="4" y="42.3" width="39" height="1.5" fill="#b9b9a0" opacity="0.68"/><rect x="44" y="42.3" width="2" height="1.5" fill="#6a9955" opacity="0.68"/><rect x="47" y="42.3" width="10" height="1.5" fill="#6a9955" opacity="0.68"/><rect x="58" y="42.3" width="3" height="1.5" fill="#6a9955" opacity="0.68"/><rect x="62" y="42.3" width="4" height="1.5" fill="#6a9955" opacity="0.68"/><rect x="67" y="42.3" width="9" height="1.5" fill="#6a9955" opacity="0.68"/><rect x="77" y="42.3" width="3" height="1.5" fill="#6a9955" opacity="0.68"/><rect x="81" y="42.3" width="1" height="1.5" fill="#6a9955" opacity="0.68"/><rect x="4" y="44.3" width="5" height="1.5" fill="#b9b9a0" opacity="0.68"/><rect x="10" y="44.3" width="3" height="1.5" fill="#b9b9a0" opacity="0.68"/><rect x="44" y="44.3" width="2" height="1.5" fill="#6a9955" opacity="0.68"/><rect x="47" y="44.3" width="8" height="1.5" fill="#6a9955" opacity="0.68"/><rect x="56" y="44.3" width="4" height="1.5" fill="#6a9955" opacity="0.68"/><rect x="61" y="44.3" width="3" height="1.5" fill="#6a9955" opacity="0.68"/><rect x="65" y="44.3" width="9" height="1.5" fill="#6a9955" opacity="0.68"/><rect x="75" y="44.3" width="7" height="1.5" fill="#6a9955" opacity="0.68"/><rect x="4" y="46.3" width="1" height="1.5" fill="#b9b9a0" opacity="0.68"/><rect x="8" y="48.3" width="42" height="1.5" fill="#b9b9a0" opacity="0.68"/><rect x="51" y="48.3" width="2" height="1.5" fill="#6a9955" opacity="0.68"/><rect x="54" y="48.3" width="7" height="1.5" fill="#6a9955" opacity="0.68"/><rect x="62" y="48.3" width="8" height="1.5" fill="#6a9955" opacity="0.68"/><rect x="71" y="48.3" width="3" height="1.5" fill="#6a9955" opacity="0.68"/><rect x="75" y="48.3" width="4" height="1.5" fill="#6a9955" opacity="0.68"/><rect x="80" y="48.3" width="2" height="1.5" fill="#6a9955" opacity="0.68"/><rect x="4" y="50.3" width="1" height="1.5" fill="#b9b9a0" opacity="0.68"/><rect x="0" y="52.3" width="1" height="1.5" fill="#b9b9a0" opacity="0.68"/></svg>
<div class="b" style="left:988px;top:92px;width:13px;height:430px;background:#1f1f1f;border-left:1px solid #0f0f0f;box-sizing:border-box"></div>
<div class="b" style="left:989px;top:93px;width:12px;height:1.5px;background:#a8a8a8;"></div>
<div class="b" style="left:998px;top:239px;width:3px;height:8px;background:#e51c1c;"></div>
<div class="b" style="left:229px;top:522px;width:772px;height:226px;background:#181818;"></div>
<div class="b" style="left:229px;top:522px;width:772px;height:1px;background:#2b2b2b;"></div>
<span id="t45" class="t" style="left:249px;top:531px;font-size:11px;color:#9d9d9d;transform:scaleX(0.8767);">PROBLEMS</span>
<div class="b" style="left:313px;top:532px;width:18px;height:18px;background:#616161;border-radius:9px"></div>
<span id="t46" class="t" style="left:319px;top:531px;font-size:11px;color:#f8f8f8;transform:scaleX(1.0000);font-weight:bold;">2</span>
<span id="t47" class="t" style="left:353px;top:531px;font-size:11px;color:#9d9d9d;transform:scaleX(0.9197);">OUTPUT</span>
<span id="t48" class="t" style="left:418px;top:531px;font-size:11px;color:#9d9d9d;transform:scaleX(0.8920);">DEBUG CONSOLE</span>
<span id="t49" class="t" style="left:527px;top:531px;font-size:11px;color:#e7e7e7;transform:scaleX(0.9456);">TERMINAL</span>
<div class="b" style="left:525px;top:551px;width:56px;height:1px;background:#0078d4;"></div>
<span id="t50" class="t" style="left:603px;top:531px;font-size:11px;color:#9d9d9d;transform:scaleX(0.8381);">PORTS</span>
<span id="t51" class="t" style="left:659px;top:531px;font-size:11px;color:#9d9d9d;transform:scaleX(0.8662);">ESP-IDF</span>
<svg class="b" style="left:881px;top:533px;" width="16" height="16" viewBox="0 0 16 16" preserveAspectRatio="none"><rect x="1.5" y="2" width="12" height="12" rx="1" stroke="#ccc" stroke-width="1.1" fill="none"/><path d="M7.5 2 V14" stroke="#ccc" stroke-width="1.1"/></svg>
<svg class="b" style="left:900px;top:538px;" width="9" height="6" viewBox="0 0 9 6" preserveAspectRatio="none"><path d="M0.7 0.8 L4.5 4.6 L8.3 0.8" stroke="#ccc" stroke-width="1.1" fill="none"/></svg>
<svg class="b" style="left:920px;top:539px;" width="16" height="4" viewBox="0 0 16 4" preserveAspectRatio="none"><circle cx="2" cy="2" r="1.1" fill="#ccc"/><circle cx="7.5" cy="2" r="1.1" fill="#ccc"/><circle cx="13" cy="2" r="1.1" fill="#ccc"/></svg>
<svg class="b" style="left:947px;top:536px;" width="12" height="8" viewBox="0 0 12 8" preserveAspectRatio="none"><path d="M0.8 7 L6 1.6 L11.2 7" stroke="#ccc" stroke-width="1.2" fill="none"/></svg>
<svg class="b" style="left:974px;top:536px;" width="10" height="10" viewBox="0 0 10 10" preserveAspectRatio="none"><path d="M0.8 0.8 L9.2 9.2 M9.2 0.8 L0.8 9.2" stroke="#ccc" stroke-width="1.2"/></svg>
<div class="term" style="top:561px"><span class="g">I (97) TWAI Master: CAN Alerts reconfigured</span></div>
<div class="term" style="top:578px"><span class="g">I (97) TWAI Master: CAN Alerts reconfigured</span></div>
<div class="term" style="top:595px"><span class="g">I (97) TWAI Master: CAN Alerts reconfigured</span></div>
<div class="term" style="top:612px"><span class="g">I (97) TWAI Master: CAN Alerts reconfigured</span></div>
<div class="term" style="top:629px"><span class="g">I (98327) TWAI Master: Message is in Standard Format</span></div>
<div class="term" style="top:646px">ID: 0</div>
<div class="term" style="top:663px">Byte: 0 = 00, 1 = 11, 2 = <u>22</u>, 3 = 33, 4 = 44, 5 = 55, 6 = 66, 7 = 77,</div>
<div class="b" style="left:249px;top:679px;width:7px;height:17px;background:#cccccc;"></div>
<div class="b" style="left:883px;top:560px;width:14px;height:188px;background:#181818;border-left:1px solid #0b0b0b;border-top:1px solid #0b0b0b;box-sizing:border-box"></div>
<div class="b" style="left:884px;top:722px;width:13px;height:20px;background:#3f3f3f;"></div>
<div class="b" style="left:897px;top:560px;width:1px;height:188px;background:#2b2b2b;"></div>
<div class="b" style="left:898px;top:623px;width:103px;height:22px;background:#37373d;"></div>
<div class="b" style="left:898px;top:623px;width:1px;height:22px;background:#0078d4;"></div>
<svg class="b" style="left:909px;top:561px;" width="14" height="14" viewBox="0 0 14 14" preserveAspectRatio="none"><rect x="0.6" y="0.6" width="12.8" height="12.8" rx="1" stroke="#ccc" stroke-width="1.1" fill="none"/><path d="M3 4 L6 7 L3 10 M6.5 10 H10.5" stroke="#ccc" stroke-width="1.1" fill="none"/></svg>
<span id="t52" class="t" style="left:928px;top:559px;font-size:13px;color:#cccccc;transform:scaleX(0.8763);">ESP-IDF ...</span>
<svg class="b" style="left:909px;top:583px;" width="14" height="14" viewBox="0 0 14 14" preserveAspectRatio="none"><rect x="0.6" y="0.6" width="12.8" height="12.8" rx="1" stroke="#ccc" stroke-width="1.1" fill="none"/><path d="M3 4 L6 7 L3 10 M6.5 10 H10.5" stroke="#ccc" stroke-width="1.1" fill="none"/></svg>
<span id="t53" class="t" style="left:928px;top:581px;font-size:13px;color:#cccccc;transform:scaleX(0.8617);">ESP-I...</span>
<svg class="b" style="left:977px;top:584px;" width="14" height="12" viewBox="0 0 14 12" preserveAspectRatio="none"><path d="M1 7.5 L4.5 11 L13 1" stroke="#aaa" stroke-width="1.2" fill="none"/></svg>
<svg class="b" style="left:909px;top:605px;" width="14" height="14" viewBox="0 0 14 14" preserveAspectRatio="none"><rect x="0.6" y="0.6" width="12.8" height="12.8" rx="1" stroke="#ccc" stroke-width="1.1" fill="none"/><path d="M3 4 L6 7 L3 10 M6.5 10 H10.5" stroke="#ccc" stroke-width="1.1" fill="none"/></svg>
<span id="t54" class="t" style="left:928px;top:603px;font-size:13px;color:#cccccc;transform:scaleX(0.8617);">ESP-I...</span>
<svg class="b" style="left:977px;top:606px;" width="14" height="12" viewBox="0 0 14 12" preserveAspectRatio="none"><path d="M1 7.5 L4.5 11 L13 1" stroke="#aaa" stroke-width="1.2" fill="none"/></svg>
<svg class="b" style="left:909px;top:627px;" width="14" height="14" viewBox="0 0 14 14" preserveAspectRatio="none"><rect x="0.6" y="0.6" width="12.8" height="12.8" rx="1" stroke="#ccc" stroke-width="1.1" fill="none"/><path d="M3 4 L6 7 L3 10 M6.5 10 H10.5" stroke="#ccc" stroke-width="1.1" fill="none"/></svg>
<span id="t55" class="t" style="left:928px;top:625px;font-size:13px;color:#cccccc;transform:scaleX(0.8763);">ESP-IDF ...</span>
<div class="b" style="left:226px;top:641px;width:654px;height:66px;background:transparent;border:3px solid #f53b3d;box-sizing:border-box"></div>
<div class="b" style="left:1px;top:747px;width:1000px;height:21px;background:#181818;border-top:1px solid #2b2b2b;box-sizing:border-box;border-radius:0 0 8px 8px"></div>
<div class="b" style="left:1px;top:748px;width:33px;height:20px;background:#0078d4;border-radius:0 0 0 8px"></div>
<svg class="b" style="left:12px;top:751px;" width="11" height="14" viewBox="0 0 11 14" preserveAspectRatio="none"><path d="M0.6 5.6 L4.8 8.9 L0.9 12.8 M9.9 1.1 L5.5 4.9 L9.9 7.9" stroke="#fff" stroke-width="1.2" fill="none"/></svg>
<svg class="b" style="left:42px;top:751px;" width="14" height="13" viewBox="0 0 14 13" preserveAspectRatio="none"><path d="M1.5 1 L4 3.2 Q7 2.4 10 3.2 L12.5 1 V5 Q13.5 7 13 9 Q12 12 7 12 Q2 12 1 9 Q0.5 7 1.5 5 Z" fill="#ccc"/><rect x="2.6" y="6.8" width="8.8" height="3.6" rx="1.8" fill="#181818"/><circle cx="5" cy="8.6" r="1" fill="#ccc"/><circle cx="9" cy="8.6" r="1" fill="#ccc"/></svg>
<span id="t56" class="t" style="left:59px;top:749px;font-size:12px;color:#cccccc;transform:scaleX(0.9067);">ESP-IDF v5.3.1</span>
<svg class="b" style="left:153px;top:750px;" width="9" height="15" viewBox="0 0 9 15" preserveAspectRatio="none"><path d="M2.7 1.5 V5 M6.3 1.5 V5 M1 5 H8 V7.5 Q8 10.8 4.5 10.8 Q1 10.8 1 7.5 Z M4.5 11 V14.2" stroke="#ccc" stroke-width="1.3" fill="none"/></svg>
<span id="t57" class="t" style="left:168px;top:749px;font-size:12px;color:#cccccc;transform:scaleX(0.9578);">COM26</span>
<svg class="b" style="left:223px;top:751px;" width="14" height="14" viewBox="0 0 14 14" preserveAspectRatio="none"><rect x="3" y="3" width="8" height="8" rx="1" stroke="#ccc" stroke-width="1.2" fill="none"/><rect x="5.5" y="5.5" width="3" height="3" fill="#ccc"/><path d="M5 0.5 V3 M9 0.5 V3 M5 11 V13.5 M9 11 V13.5 M0.5 5 H3 M0.5 9 H3 M11 5 H13.5 M11 9 H13.5" stroke="#ccc" stroke-width="1.1"/></svg>
<span id="t58" class="t" style="left:241px;top:749px;font-size:12px;color:#cccccc;transform:scaleX(0.9388);">esp32s3</span>
<svg class="b" style="left:300px;top:751px;" width="14" height="13" viewBox="0 0 14 13" preserveAspectRatio="none"><path d="M1 2 H5.5 L7 3.8 H13 V11.5 H1 Z M1 6 H6 L7.5 4.5" stroke="#ccc" stroke-width="1.2" fill="none"/><path d="M3 8 h5" stroke="#ccc" stroke-width="1"/></svg>
<svg class="b" style="left:330px;top:751px;" width="14" height="14" viewBox="0 0 14 14" preserveAspectRatio="none"><path d="M11.47 5.91 L13.33 6.05 L13.33 7.95 L11.47 8.09 L10.93 9.39 L12.15 10.80 L10.80 12.15 L9.39 10.93 L8.09 11.47 L7.95 13.33 L6.05 13.33 L5.91 11.47 L4.61 10.93 L3.20 12.15 L1.85 10.80 L3.07 9.39 L2.53 8.09 L0.67 7.95 L0.67 6.05 L2.53 5.91 L3.07 4.61 L1.85 3.20 L3.20 1.85 L4.61 3.07 L5.91 2.53 L6.05 0.67 L7.95 0.67 L8.09 2.53 L9.39 3.07 L10.80 1.85 L12.15 3.20 L10.93 4.61 Z" stroke="#ccc" stroke-width="1.15" fill="none" stroke-linejoin="round"/><circle cx="7" cy="7" r="1.8" stroke="#ccc" stroke-width="1.1" fill="none"/></svg>
<svg class="b" style="left:360px;top:750px;" width="13" height="15" viewBox="0 0 13 15" preserveAspectRatio="none"><path d="M1 3.6 H12 M4.5 3.5 V1.6 H8.5 V3.5 M2.4 3.6 L3 13.6 H10 L10.6 3.6" stroke="#ccc" stroke-width="1.2" fill="none"/><path d="M4.7 5.5 V11.8 M6.5 5.5 V11.8 M8.3 5.5 V11.8" stroke="#b0b0b0" stroke-width="0.9"/></svg>
<svg class="b" style="left:389px;top:751px;" width="14" height="14" viewBox="0 0 14 14" preserveAspectRatio="none"><path d="M1.5 12.5 L7.5 6.5 Q6.5 3 9.5 1.5 Q11 1 12 1.5 L9.8 3.8 L10.6 5.4 L12.3 5.8 L13.6 3.6 Q14 6.8 11.5 8 Q10 8.6 8.6 8 L3 13.8 Z" stroke="#ccc" stroke-width="1.15" fill="none" stroke-linejoin="round"/></svg>
<svg class="b" style="left:420px;top:751px;" width="14" height="13" viewBox="0 0 14 13" preserveAspectRatio="none"><path d="M7 1.2 L8.8 5 L12.9 5.5 L9.9 8.3 L10.7 12.3 L7 10.3 L3.3 12.3 L4.1 8.3 L1.1 5.5 L5.2 5 Z" fill="none" stroke="#ccc" stroke-width="1.25" stroke-linejoin="miter"/></svg>
<span id="t59" class="t" style="left:437.5px;top:749px;font-size:12px;color:#cccccc;transform:scaleX(0.8659);">UART</span>
<svg class="b" style="left:484.5px;top:751.5px;" width="9.5" height="13" viewBox="0 0 11 15" preserveAspectRatio="none"><path d="M6.5 1 H3.5 L1.5 7.5 H4.5 L3 14 L9.5 5.5 H6 L8 1 Z" stroke="#ccc" stroke-width="1.15" fill="none" stroke-linejoin="round"/></svg>
<svg class="b" style="left:512px;top:752px;" width="13.5" height="12" viewBox="0 0 15 14" preserveAspectRatio="none"><rect x="1" y="1" width="13" height="9.5" rx="1" stroke="#ccc" stroke-width="1.2" fill="none"/><path d="M5 13 H10 M7.5 10.5 V13" stroke="#ccc" stroke-width="1.2"/></svg>
<svg class="b" style="left:540px;top:750px;" width="16" height="16" viewBox="0 0 16 16" preserveAspectRatio="none"><path d="M5.5 6 V1.5 L14.5 7.5 L10 10.5" stroke="#ccc" stroke-width="1.15" fill="none" stroke-linejoin="round"/><ellipse cx="5" cy="11.5" rx="2.2" ry="2.8" stroke="#ccc" stroke-width="1.1" fill="none"/><path d="M3 9.8 L1.6 8.6 M7 9.8 L8.4 8.6 M2.8 11.8 H1 M7.2 11.8 H9 M3.2 13.6 L1.8 15 M6.8 13.6 L8.2 15" stroke="#ccc" stroke-width="1"/></svg>
<svg class="b" style="left:572px;top:750px;" width="12" height="15" viewBox="0 0 12 15" preserveAspectRatio="none"><path d="M6 1 Q7 4 9.5 6.5 Q11 8.5 10.5 11 Q9.5 14 6 14 Q2.5 14 1.5 11 Q1 8.5 3 6.5 Q3.5 8 4.5 8.5 Q4 4 6 1 Z M6 14 Q4 12.5 6 10 Q8 12.5 6 14" stroke="#ccc" stroke-width="1.15" fill="none" stroke-linejoin="round"/></svg>
<svg class="b" style="left:602px;top:751.5px;" width="13" height="12" viewBox="0 0 14 14" preserveAspectRatio="none"><rect x="0.6" y="0.6" width="12.8" height="12.8" rx="1" stroke="#ccc" stroke-width="1.2" fill="none"/><path d="M3 4 L6 7 L3 10 M6.5 10 H10.5" stroke="#ccc" stroke-width="1.2" fill="none"/></svg>
<svg class="b" style="left:632px;top:751.5px;" width="13" height="12" viewBox="0 0 14 14" preserveAspectRatio="none"><rect x="0.6" y="0.6" width="12.8" height="12.8" rx="1" stroke="#ccc" stroke-width="1.2" fill="none"/><path d="M3 7 H10 M7 3.5 L10.5 7 L7 10.5 Z" stroke="#ccc" stroke-width="1.4" fill="#ccc"/></svg>
<svg class="b" style="left:662px;top:751px;" width="14" height="14" viewBox="0 0 14 14" preserveAspectRatio="none"><circle cx="7" cy="7" r="6" stroke="#ccc" stroke-width="1.1" fill="none"/><path d="M4.6 4.6 L9.4 9.4 M9.4 4.6 L4.6 9.4" stroke="#ccc" stroke-width="1.1"/></svg>
<span id="t60" class="t" style="left:678px;top:749px;font-size:12px;color:#cccccc;transform:scaleX(1.0000);">2</span>
<svg class="b" style="left:689px;top:751px;" width="15" height="14" viewBox="0 0 15 14" preserveAspectRatio="none"><path d="M7.5 1.2 L14 12.8 H1 Z" stroke="#ccc" stroke-width="1.15" fill="none" stroke-linejoin="round"/><path d="M7.5 5 V9 M7.5 10.3 V11.6" stroke="#ccc" stroke-width="1.1"/></svg>
<span id="t61" class="t" style="left:706px;top:749px;font-size:12px;color:#cccccc;transform:scaleX(1.0000);">0</span>
<svg class="b" style="left:729.5px;top:751px;" width="13" height="14" viewBox="0 0 13 14" preserveAspectRatio="none"><path d="M6.5 5 L4 13.5 M6.5 5 L9 13.5 M4.8 10.5 H8.2" stroke="#ccc" stroke-width="1.1" fill="none"/><circle cx="6.5" cy="4.5" r="1.1" fill="#ccc"/><path d="M4 2 Q2.6 4.5 4 7 M2 0.8 Q-0.2 4.5 2 8.2 M9 2 Q10.4 4.5 9 7 M11 0.8 Q13.2 4.5 11 8.2" stroke="#ccc" stroke-width="1" fill="none"/></svg>
<span id="t62" class="t" style="left:746px;top:749px;font-size:12px;color:#cccccc;transform:scaleX(1.0000);">0</span>
<svg class="b" style="left:768.5px;top:751px;" width="14" height="14" viewBox="0 0 14 14" preserveAspectRatio="none"><path d="M11.47 5.91 L13.33 6.05 L13.33 7.95 L11.47 8.09 L10.93 9.39 L12.15 10.80 L10.80 12.15 L9.39 10.93 L8.09 11.47 L7.95 13.33 L6.05 13.33 L5.91 11.47 L4.61 10.93 L3.20 12.15 L1.85 10.80 L3.07 9.39 L2.53 8.09 L0.67 7.95 L0.67 6.05 L2.53 5.91 L3.07 4.61 L1.85 3.20 L3.20 1.85 L4.61 3.07 L5.91 2.53 L6.05 0.67 L7.95 0.67 L8.09 2.53 L9.39 3.07 L10.80 1.85 L12.15 3.20 L10.93 4.61 Z" stroke="#ccc" stroke-width="1.15" fill="none" stroke-linejoin="round"/><circle cx="7" cy="7" r="1.8" stroke="#ccc" stroke-width="1.1" fill="none"/></svg>
<span id="t63" class="t" style="left:786px;top:749px;font-size:12px;color:#cccccc;transform:scaleX(0.9967);">Build</span>
<svg class="b" style="left:828px;top:750px;" width="15" height="16" viewBox="0 0 15 16" preserveAspectRatio="none"><ellipse cx="7.5" cy="9" rx="3.4" ry="4.4" stroke="#ccc" stroke-width="1.1" fill="none"/><path d="M5 5.5 Q7.5 2.5 10 5.5 M4.6 6 L2.5 3.8 M10.4 6 L12.5 3.8 M4 9 H1 M11 9 H14 M4.6 12 L2.5 14.2 M10.4 12 L12.5 14.2" stroke="#ccc" stroke-width="1.1" fill="none"/></svg>
<svg class="b" style="left:859.5px;top:751px;" width="12" height="14" viewBox="0 0 12 14" preserveAspectRatio="none"><path d="M1.5 1.5 L10.5 7 L1.5 12.5 Z" stroke="#ccc" stroke-width="1.2" fill="none" stroke-linejoin="round"/></svg>
<span id="t64" class="t" style="left:888px;top:748px;font-size:12px;color:#cccccc;transform:scaleX(1.0212);">{ }</span>
<span id="t65" class="t" style="left:906.5px;top:749px;font-size:12px;color:#cccccc;transform:scaleX(1.0000);">C</span>
<span id="t66" class="t" style="left:929px;top:749px;font-size:12px;color:#cccccc;transform:scaleX(0.9878);">Win32</span>
<div class="b" style="left:970px;top:748px;width:31px;height:20px;background:#7a6400;border-radius:0 0 8px 0"></div>
<svg class="b" style="left:980px;top:751.5px;" width="14" height="13" viewBox="0 0 15 14" preserveAspectRatio="none"><path d="M7.5 1.2 L14 12.8 H1 Z" stroke="#fff" stroke-width="1.2" fill="none" stroke-linejoin="round"/><path d="M7.5 5 V9 M7.5 10.3 V11.6" stroke="#fff" stroke-width="1.2"/></svg>
</body></html>
